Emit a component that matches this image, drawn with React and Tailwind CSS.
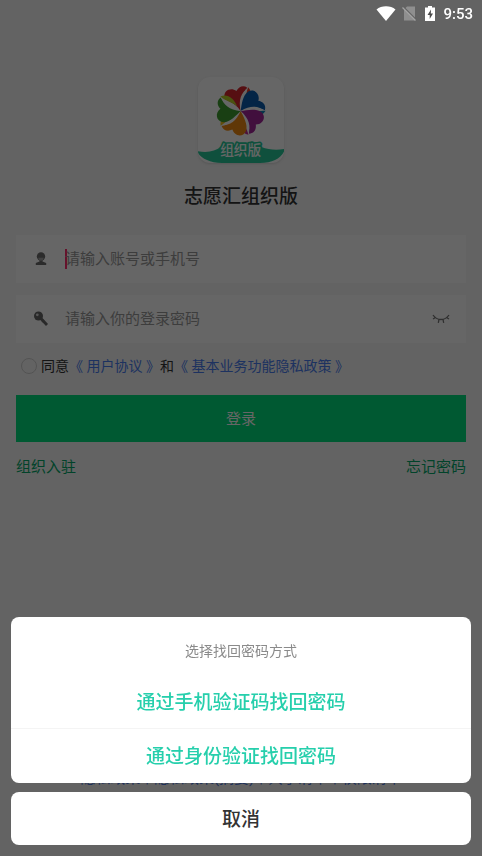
import React, { useState } from 'react';

const FONT = "font-['Roboto','Noto_Sans_CJK_SC',sans-serif]";

// Petals of the logo, turned around the flower's centre
const PETALS = [
  { id: 'red', angle: -12, fill: '#d8262e', tail: '#e8402c' },
  { id: 'blue', angle: 60, fill: '#0a5cae', tail: '#0d86b8' },
  { id: 'purple', angle: 132, fill: '#a3269a', tail: '#c22c96' },
  { id: 'orange', angle: 204, fill: '#f08a12', tail: '#f5c21c' },
  { id: 'green', angle: 276, fill: '#3f9f30', tail: '#b8d02a' },
];

const StatusBar = () => (
  <header className="relative z-20 flex h-7 items-center justify-end pr-[9px] text-white">
    <svg className="mr-[5px] h-4 w-5" viewBox="0 0 20 16" fill="currentColor">
      <path d="M10 15 0.500 3.500C3 1.300 6.300 0.300 10 0.300S17 1.300 19.500 3.500Z" />
    </svg>
    <svg className="mr-[7px] h-4 w-4" viewBox="0 0 16 16">
      <path d="M6 0.500h8v14H3V3.500z" fill="#8f8f8f" />
      <path d="M2.500 1 15.500 14" stroke="#636363" strokeWidth="1.500" />
      <path d="M1.500 1.500 14.500 14.500" stroke="#a4a4a4" strokeWidth="1.300" />
    </svg>
    <svg className="mr-[7px] h-4 w-3" viewBox="0 0 12 16">
      <path d="M4 0h4v1.500h3v13.500H1V1.500h3z" fill="currentColor" />
      <path d="M7 3.500 3.500 9h2.200V13L9 7.500H6.800z" fill="#4a4a4a" />
    </svg>
    <span className="text-[15px] leading-none font-medium">9:53</span>
  </header>
);

const Logo = () => (
  <svg className="h-[86px] w-[86px] rounded-xl bg-white shadow-sm" viewBox="24 22 258 258">
    {PETALS.map(({ id, angle, fill, tail }) => (
      <g key={id} transform={`translate(152 124) rotate(${angle})`}>
        <path d="M0 0C-14 -12 -38 -28 -39 -49C-39 -70 -14 -77 0 -61C10 -73 24 -75 34 -64C16 -52 4 -28 0 0Z" fill={fill} />
        <path d="M0 0C0 -34 12 -54 38 -64C24 -50 30 -24 0 0Z" fill="#fff" />
        <path d="M13 -12C25 -30 24 -46 37 -65C49 -46 36 -24 13 -12Z" fill={tail} />
      </g>
    ))}
    <path d="M24 245C56 250 76 244 92 232C120 222 190 222 214 232C236 240 258 242 282 238V246C270 268 246 279 210 280H96C60 279 36 268 24 250Z" fill="#27c99a" />
    <text
      x="152"
      y="256"
      textAnchor="middle"
      fontSize="41"
      fontWeight="500"
      fill="#fff"
      stroke="#27c99a"
      strokeWidth="10"
      paintOrder="stroke"
      strokeLinejoin="round"
    >
      组织版
    </text>
  </svg>
);

// Head with a fringe, over a pair of shoulders
const UserIcon = () => (
  <svg className="h-4 w-4" viewBox="0 0 16 16" fill="#6c6c6c">
    <circle cx="8" cy="5.500" r="4.200" />
    <path d="M6.500 9h3v1.500l3.700 1.500v2H2.800v-2l3.700-1.500z" />
    <path d="M5.300 6.800h5.400c-.3 2.400-1.500 3-2.700 3s-2.400-.6-2.700-3z" fill="#a4a4a4" />
  </svg>
);

const KeyIcon = () => (
  <svg className="h-4 w-4" viewBox="0 0 16 16">
    <circle cx="5.500" cy="5" r="4.500" fill="#666" />
    <path d="M7.500 7 14 14" stroke="#666" strokeWidth="2.800" />
    <path d="M9 11l2-2" stroke="#666" strokeWidth="1.500" />
    <circle cx="4.300" cy="3.800" r="1.400" fill="#d8d8d8" />
  </svg>
);

const ClosedEyeIcon = () => (
  <svg className="h-3 w-5" viewBox="0 0 20 12" fill="none" stroke="#777" strokeWidth="1.300">
    <path d="M2 2C6 8 14 8 18 2M4.500 4.500 2 6M15.500 4.500 18 6M8 6.500 7.300 9.800M12 6.500l.7 3.300" />
  </svg>
);

const Sheet = ({ onClose }) => (
  <div className="fixed inset-0 z-10 flex flex-col justify-end gap-[9px] bg-black/60 p-[11px]" role="dialog" aria-modal="true">
    <div className="overflow-hidden rounded-lg bg-white">
      <h2 className="pt-[23px] pb-[13px] text-center text-sm leading-[22px] text-[#8a8a8a]">选择找回密码方式</h2>
      <button className="block h-[53px] w-full pt-[3px] text-[19px] font-medium text-[#26cfac]">
        通过手机验证码找回密码
      </button>
      <button className="block h-[55px] w-full border-t border-[#f4f4f4] pt-[3px] text-[19px] font-medium text-[#26cfac]">
        通过身份验证找回密码
      </button>
    </div>
    <button
      onClick={onClose}
      className="h-[53px] shrink-0 rounded-lg bg-white pt-[3px] text-[19px] font-medium text-[#333]"
    >
      取消
    </button>
  </div>
);

const App = () => {
  const [sheetOpen, setSheetOpen] = useState(true);

  return (
    <div className={`flex min-h-screen flex-col bg-[#f7f7f7] ${FONT}`}>
      <StatusBar />

      <main className="flex flex-1 flex-col px-4 pt-[49px]">
        <div className="flex flex-col items-center">
          <Logo />
          <h1 className="mt-5 text-[19px] leading-7 font-medium text-[#333]">志愿汇组织版</h1>
        </div>

        <form className="mt-6 flex flex-col" onSubmit={(e) => e.preventDefault()}>
          <div className="flex h-12 items-center bg-white pl-[17px]">
            <UserIcon />
            <span className="-mr-[2px] ml-4 h-5 w-[2px] bg-[#ff2d6e]" />
            <input
              type="text"
              aria-label="账号"
              placeholder="请输入账号或手机号"
              className="min-w-0 flex-1 bg-transparent text-[15px] outline-none placeholder:text-[#999]"
            />
          </div>
          <div className="mt-3 flex h-12 items-center bg-white pr-[15px] pl-[17px]">
            <KeyIcon />
            <input
              type="password"
              aria-label="密码"
              placeholder="请输入你的登录密码"
              className="ml-4 min-w-0 flex-1 bg-transparent text-[15px] outline-none placeholder:text-[#999]"
            />
            <button type="button" aria-label="显示密码">
              <ClosedEyeIcon />
            </button>
          </div>

          <div className="mt-[11px] flex h-6 items-center pl-[5px] text-sm whitespace-pre text-[#333]">
            <input
              id="agree"
              type="checkbox"
              className="mr-1 h-4 w-4 appearance-none rounded-full border border-[#d0d0d0]"
            />
            <label htmlFor="agree">同意</label>
            <a href="#terms" className="text-[#4a7df0]">《 用户协议 》</a>
            <span>和</span>
            <a href="#privacy" className="text-[#4a7df0]">《 基本业务功能隐私政策 》</a>
          </div>

          <button className="mt-[17px] h-[47px] bg-[#00df7d] pt-[2px] text-[15px] text-white">登录</button>
        </form>

        <div className="mt-[13px] flex justify-between text-[15px] leading-6 text-[#04a86a]">
          <a href="#join">组织入驻</a>
          <button onClick={() => setSheetOpen(true)}>忘记密码</button>
        </div>
      </main>

      <footer className="flex justify-center gap-[5px] pb-[66px] text-[15px] leading-6 whitespace-nowrap text-[#4a78e0]">
        <a href="#privacy">隐私政策</a>
        <span>|</span>
        <a href="#summary">隐私政策(摘要)</a>
        <span>|</span>
        <a href="#share">共享清单</a>
        <span>|</span>
        <a href="#permissions">权限清单</a>
      </footer>

      {sheetOpen && <Sheet onClose={() => setSheetOpen(false)} />}
    </div>
  );
};

export default App;
